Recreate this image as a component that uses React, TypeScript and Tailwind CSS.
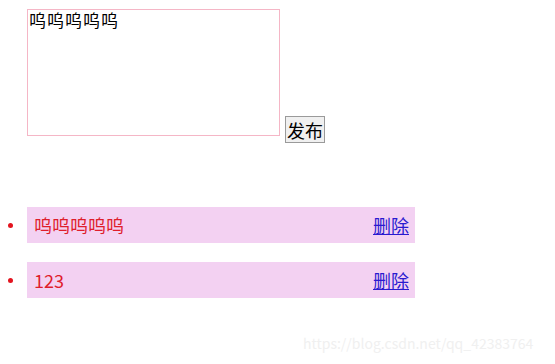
const items = ['呜呜呜呜呜', '123'];

export default function App() {
  return (
    <div
      className="relative h-[364px] w-[555px] bg-white"
      style={{ fontFamily: '"Microsoft YaHei", "Noto Sans CJK SC", sans-serif' }}
    >
      <div className="flex items-end gap-[5px] pl-[27px] pt-[9px]">
        <div className="mb-[7px] h-[127px] w-[253px] border border-[#f5b6c6]">
          <textarea
            defaultValue="呜呜呜呜呜"
            className="block h-full w-full resize-none appearance-none border-0 bg-white px-[1px] py-0 text-[17px] leading-[19px] tracking-[1px] text-black outline-none"
          />
        </div>
        <button className="h-[27px] w-[40px] border border-[#9a9a9a] bg-[#f0f0f0] p-0 text-[18px] leading-[24px] text-black">
          发布
        </button>
      </div>

      <ul className="mt-[64px] flex flex-col gap-[19px]">
        {items.map((item) => (
          <li key={item} className="flex items-center">
            <span className="ml-[8px] mr-[14px] h-[5px] w-[5px] rounded-full bg-[#e3141f]" />
            <div className="flex h-[36px] w-[388px] items-center justify-between bg-[#f3d1f2] pl-[7px] pr-[6px] text-[18px]">
              <span className="text-[#df1d2c]">{item}</span>
              <a href="#" className="text-[#2a1ad0] underline">
                删除
              </a>
            </div>
          </li>
        ))}
      </ul>

      <div className="absolute left-[303px] top-[333px] text-[14px] text-[#f0f0f0]">
        https://blog.csdn.net/qq_42383764
      </div>
    </div>
  );
}
